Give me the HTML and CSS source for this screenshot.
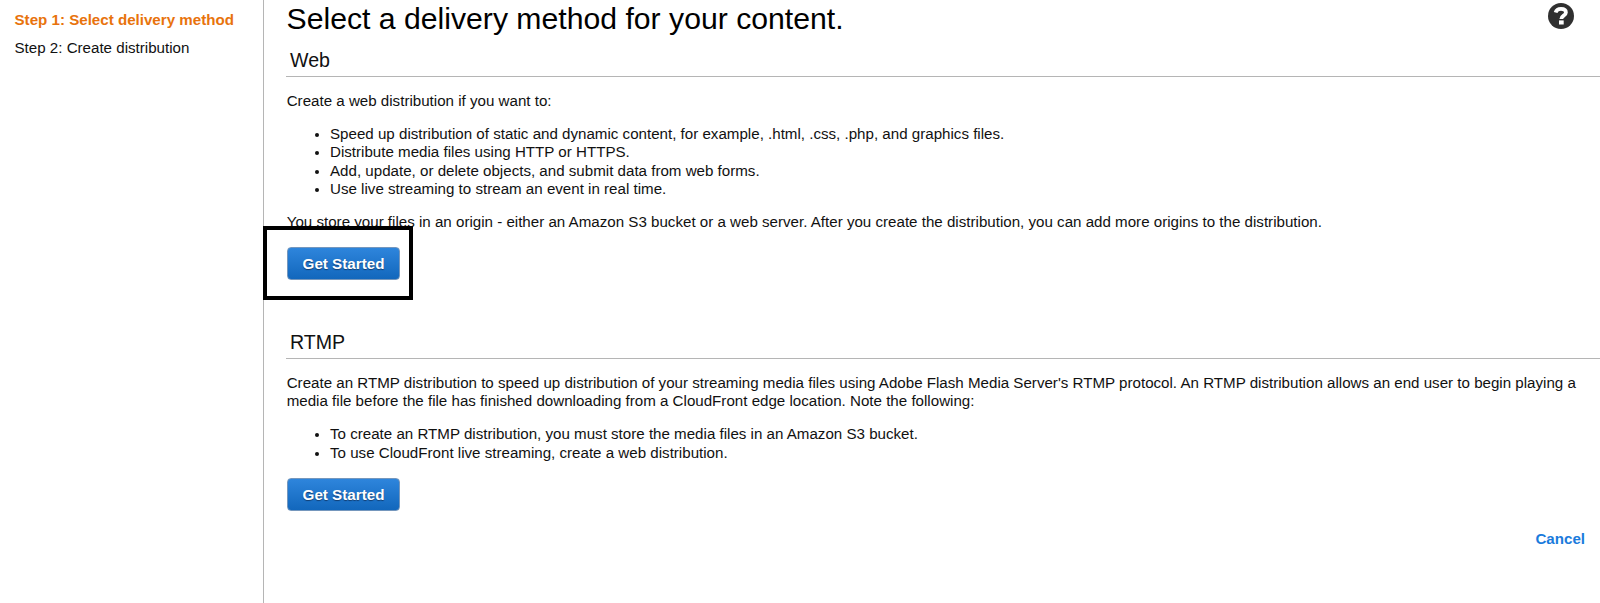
FILE: index.html
```html
<!DOCTYPE html>
<html lang="en">
<head>
<meta charset="utf-8">
<title>Select delivery method</title>
<link rel="stylesheet" href="styles.css">
</head>
<body>
<div class="wizard">
  <nav class="steps">
    <div class="step step-active">Step 1: Select delivery method</div>
    <div class="step">Step 2: Create distribution</div>
  </nav>
  <main class="content">
    <header class="top">
      <h1 class="title">Select a delivery method for your content.</h1>
      <svg class="help" viewBox="0 0 26 26" role="img" aria-label="Help">
        <circle cx="13" cy="13" r="13" fill="#303030"/>
        <path d="M7.600 9.500C8.400 6.900 10.300 5.900 13 5.900c3 0 4.900 1.400 4.900 3.600 0 3.300-4.600 3-4.600 6.500" fill="none" stroke="#fff" stroke-width="3.800"/>
        <rect x="11" y="17.400" width="4.700" height="4.100" fill="#fff"/>
      </svg>
    </header>
    <section class="method web">
      <h2 class="heading">Web</h2>
      <p class="text">Create a web distribution if you want to:</p>
      <ul class="list">
        <li>Speed up distribution of static and dynamic content, for example, .html, .css, .php, and graphics files.</li>
        <li>Distribute media files using HTTP or HTTPS.</li>
        <li>Add, update, or delete objects, and submit data from web forms.</li>
        <li>Use live streaming to stream an event in real time.</li>
      </ul>
      <p class="text">You store your files in an origin - either an Amazon S3 bucket or a web server. After you create the distribution, you can add more origins to the distribution.</p>
      <div class="action"><button class="button">Get Started</button><span class="marker"></span></div>
    </section>
    <section class="method">
      <h2 class="heading">RTMP</h2>
      <p class="text">Create an RTMP distribution to speed up distribution of your streaming media files using Adobe Flash Media Server's RTMP protocol. An RTMP distribution allows an end user to begin playing a media file before the file has finished downloading from a CloudFront edge location. Note the following:</p>
      <ul class="list">
        <li>To create an RTMP distribution, you must store the media files in an Amazon S3 bucket.</li>
        <li>To use CloudFront live streaming, create a web distribution.</li>
      </ul>
      <div class="action"><button class="button">Get Started</button></div>
    </section>
    <footer class="footer"><a class="cancel">Cancel</a></footer>
  </main>
</div>
</body>
</html>
```
FILE: styles.css
```css
* { box-sizing: border-box; }
body {
  margin: 0;
  background: #fff;
  color: #111;
  font: 15.14px/18.2px "Liberation Sans", Arial, sans-serif;
}
.wizard { display: flex; height: 603px; overflow: hidden; }
.steps {
  flex: none;
  width: 264px;
  padding: 11px 0 0 14.5px;
  border-right: 1px solid #b5b5b5;
}
.step { margin-bottom: 9.4px; white-space: nowrap; }
.step-active { color: #e8730c; font-weight: bold; }
.content { flex: 1; min-width: 0; padding-left: 22px; }
.top { display: flex; justify-content: space-between; height: 45px; padding: 3px 26px 0 0.5px; }
.title { margin: 0; color: #000; font-size: 30.2px; font-weight: normal; line-height: 32px; white-space: nowrap; }
.help { width: 26px; height: 26px; flex: none; }
.heading {
  height: 32px;
  margin: 0 0 15px;
  padding: 4px 0 0 4px;
  border-bottom: 1px solid #b5b5b5;
  color: #111;
  font-size: 19.6px;
  font-weight: normal;
  line-height: 23px;
}
.text { margin: 0; padding: 0 12px 0 0.7px; }
.list { margin: 15px 0; padding-left: 44px; }
.list li::marker { font-size: 13px; }
.action { position: relative; display: flex; height: 33px; margin: 16px 0 0 1px; }
.button {
  width: 113px;
  height: 33px;
  padding: 1px 0 0;
  border: 1px solid #7597bd;
  border-radius: 4px;
  background: linear-gradient(#2f86dd, #1166bb) border-box;
  color: #fff;
  font: bold 15.2px/18px "Liberation Sans", Arial, sans-serif;
  text-shadow: 0 1px 1px #123d70;
}
.marker { position: absolute; left: -24px; top: -21px; width: 150px; height: 74px; border: 4px solid #000; }
.web { height: 282px; }
.footer { display: flex; justify-content: flex-end; padding: 19px 15px 0 0; }
.cancel { color: #1a7bdc; font-weight: bold; }
```
